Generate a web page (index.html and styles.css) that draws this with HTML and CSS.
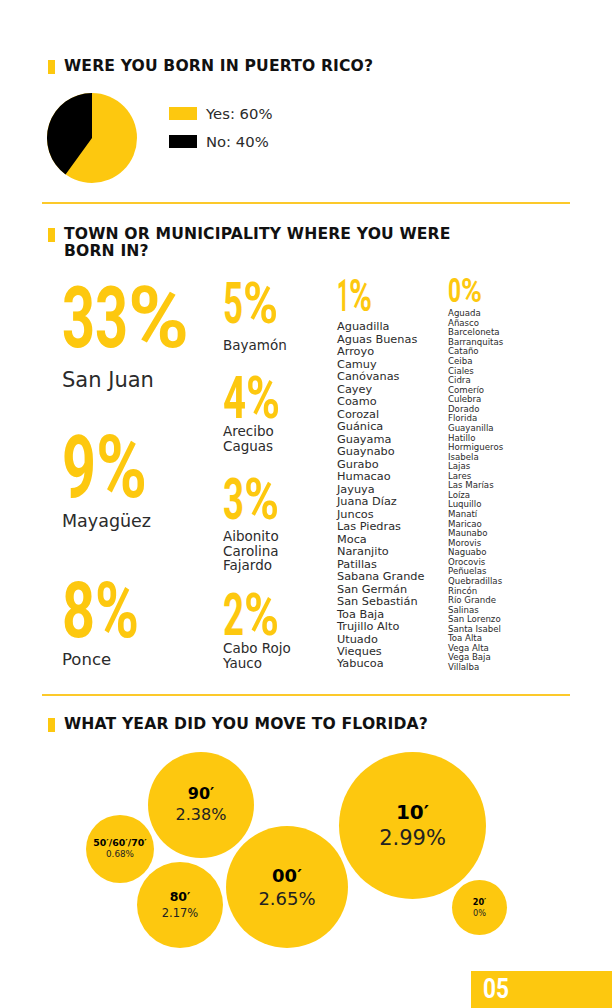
FILE: index.html
```html
<!DOCTYPE html>
<html lang="en">
<head>
<meta charset="utf-8">
<title>Survey results</title>
<link rel="stylesheet" href="styles.css">
</head>
<body>
<div class="page">

  <section class="sec s1">
    <h2 class="title">WERE YOU BORN IN PUERTO RICO?</h2>
    <div class="pie-row">
      <svg class="pie" width="90" height="90" viewBox="0 0 90 90">
        <circle cx="45" cy="45" r="45" fill="#FDC80F"/>
        <path d="M45 45 L18.55 81.41 A45 45 0 0 1 45 0 Z" fill="#000"/>
      </svg>
      <ul class="legend">
        <li><span class="sw sw-yes"></span>Yes: 60%</li>
        <li><span class="sw sw-no"></span>No: 40%</li>
      </ul>
    </div>
    <div class="divider"></div>
  </section>

  <section class="sec s2">
    <h2 class="title">TOWN OR MUNICIPALITY WHERE YOU WERE<br>BORN IN?</h2>
    <div class="cols">
      <div class="col c1">
        <svg class="big g33" width="127" height="60" viewBox="0 0 127 60"><text y="60" font-size="84.4"><tspan x="0" textLength="66" lengthAdjust="spacingAndGlyphs">33</tspan><tspan x="66" textLength="61" lengthAdjust="spacingAndGlyphs">%</tspan></text></svg>
        <p class="name n-sj">San Juan</p>
        <svg class="big g9" width="85" height="62" viewBox="0 0 85 62"><text y="62" font-size="87.2"><tspan x="0" textLength="34" lengthAdjust="spacingAndGlyphs">9</tspan><tspan x="34" textLength="51" lengthAdjust="spacingAndGlyphs">%</tspan></text></svg>
        <p class="name n-my">Mayagüez</p>
        <svg class="big g8" width="77" height="55" viewBox="0 0 77 55"><text y="55" font-size="77.4"><tspan x="0" textLength="33" lengthAdjust="spacingAndGlyphs">8</tspan><tspan x="33" textLength="44" lengthAdjust="spacingAndGlyphs">%</tspan></text></svg>
        <p class="name n-po">Ponce</p>
      </div>

      <div class="col c2">
        <svg class="big g5" width="55" height="41" viewBox="0 0 55 41"><text y="41" font-size="57.7"><tspan x="0" textLength="20" lengthAdjust="spacingAndGlyphs">5</tspan><tspan x="20" textLength="35" lengthAdjust="spacingAndGlyphs">%</tspan></text></svg>
        <p class="mid m5">Bayamón</p>
        <svg class="big g4" width="57" height="42" viewBox="0 0 57 42"><text y="42" font-size="59.1"><tspan x="0" textLength="23" lengthAdjust="spacingAndGlyphs">4</tspan><tspan x="23" textLength="34" lengthAdjust="spacingAndGlyphs">%</tspan></text></svg>
        <p class="mid m4">Arecibo<br>Caguas</p>
        <svg class="big g3" width="56" height="41" viewBox="0 0 56 41"><text y="41" font-size="57.7"><tspan x="0" textLength="21" lengthAdjust="spacingAndGlyphs">3</tspan><tspan x="21" textLength="35" lengthAdjust="spacingAndGlyphs">%</tspan></text></svg>
        <p class="mid m3">Aibonito<br>Carolina<br>Fajardo</p>
        <svg class="big g2" width="56" height="42" viewBox="0 0 56 42"><text y="42" font-size="59.1"><tspan x="0" textLength="21" lengthAdjust="spacingAndGlyphs">2</tspan><tspan x="21" textLength="35" lengthAdjust="spacingAndGlyphs">%</tspan></text></svg>
        <p class="mid m2">Cabo Rojo<br>Yauco</p>
      </div>

      <div class="col c3">
        <svg class="big g1" width="35" height="31" viewBox="0 0 35 31"><text y="31" font-size="43.6"><tspan x="0" textLength="12" lengthAdjust="spacingAndGlyphs">1</tspan><tspan x="12" textLength="23" lengthAdjust="spacingAndGlyphs">%</tspan></text></svg>
        <ul class="list l1">
          <li>Aguadilla</li><li>Aguas Buenas</li><li>Arroyo</li><li>Camuy</li><li>Canóvanas</li><li>Cayey</li><li>Coamo</li><li>Corozal</li><li>Guánica</li><li>Guayama</li><li>Guaynabo</li><li>Gurabo</li><li>Humacao</li><li>Jayuya</li><li>Juana Díaz</li><li>Juncos</li><li>Las Piedras</li><li>Moca</li><li>Naranjito</li><li>Patillas</li><li>Sabana Grande</li><li>San Germán</li><li>San Sebastián</li><li>Toa Baja</li><li>Trujillo Alto</li><li>Utuado</li><li>Vieques</li><li>Yabucoa</li>
        </ul>
      </div>

      <div class="col c4">
        <svg class="big g0" width="34" height="24" viewBox="0 0 34 24"><text y="24" font-size="33.8"><tspan x="0" textLength="13" lengthAdjust="spacingAndGlyphs">0</tspan><tspan x="13" textLength="21" lengthAdjust="spacingAndGlyphs">%</tspan></text></svg>
        <ul class="list l0">
          <li>Aguada</li><li>Añasco</li><li>Barceloneta</li><li>Barranquitas</li><li>Cataño</li><li>Ceiba</li><li>Ciales</li><li>Cidra</li><li>Comerío</li><li>Culebra</li><li>Dorado</li><li>Florida</li><li>Guayanilla</li><li>Hatillo</li><li>Hormigueros</li><li>Isabela</li><li>Lajas</li><li>Lares</li><li>Las Marías</li><li>Loíza</li><li>Luquillo</li><li>Manatí</li><li>Maricao</li><li>Maunabo</li><li>Morovis</li><li>Naguabo</li><li>Orocovis</li><li>Peñuelas</li><li>Quebradillas</li><li>Rincón</li><li>Río Grande</li><li>Salinas</li><li>San Lorenzo</li><li>Santa Isabel</li><li>Toa Alta</li><li>Vega Alta</li><li>Vega Baja</li><li>Villalba</li>
        </ul>
      </div>
    </div>
    <div class="divider"></div>
  </section>

  <section class="sec s3">
    <h2 class="title">WHAT YEAR DID YOU MOVE TO FLORIDA?</h2>
  </section>

  <div class="bubbles">
    <div class="bubble b50"><b>50′/60′/70′</b><span>0.68%</span></div>
    <div class="bubble b90"><b>90′</b><span>2.38%</span></div>
    <div class="bubble b80"><b>80′</b><span>2.17%</span></div>
    <div class="bubble b00"><b>00′</b><span>2.65%</span></div>
    <div class="bubble b10"><b>10′</b><span>2.99%</span></div>
    <div class="bubble b20"><b>20′</b><span>0%</span></div>
  </div>

  <footer class="foot">
    <div class="pageno">
      <svg class="pn" width="26" height="20" viewBox="0 0 26 20"><text x="0" y="20" font-size="28" textLength="26" lengthAdjust="spacingAndGlyphs">05</text></svg>
    </div>
  </footer>
</div>
</body>
</html>
```

FILE: styles.css
```css
* { box-sizing: border-box; }

body {
  margin: 0;
  background: #fff;
  font-family: "DejaVu Sans", "Open Sans", sans-serif;
  color: #2b2b2b;
}

.page {
  width: 612px;
  height: 1008px;
  overflow: hidden;
}

.sec { padding-left: 48px; }

.title {
  display: flex;
  align-items: flex-start;
  gap: 9px;
  margin: 0;
  font-family: "DejaVu Sans", sans-serif;
  font-weight: bold;
  font-size: 15.6px;
  line-height: 17px;
  letter-spacing: 0.15px;
  color: #111;
}
.title::before {
  content: "";
  flex: none;
  width: 7px;
  height: 14px;
  margin-top: 2px;
  background: #FDC80F;
}

.s1 .title { margin-top: 57.5px; }

.pie-row {
  display: flex;
  align-items: flex-start;
  margin-top: 18.5px;
}
.pie { display: block; margin-left: -1px; }

.legend {
  list-style: none;
  margin: 14px 0 0 32px;
  padding: 0;
  display: flex;
  flex-direction: column;
  gap: 15px;
}
.legend li {
  display: flex;
  align-items: center;
  gap: 9px;
  height: 13px;
  font-size: 14.8px;
  line-height: 13px;
  color: #2b2b2b;
}
.sw { display: block; width: 28px; height: 13px; }
.sw-yes { background: #FDC80F; }
.sw-no { background: #000; }

.divider {
  width: 528px;
  height: 2px;
  margin-left: -6px;
  background: #FCC92A;
}
.s1 .divider { margin-top: 19px; }

.s2 .title { margin-top: 22px; }

.cols {
  display: flex;
  height: 434px;
  padding-left: 14px;
}
.col { display: flex; flex-direction: column; align-items: flex-start; }
.c1 { width: 161px; }
.c2 { width: 114px; }
.c3 { width: 111px; }
.c4 { flex: 1; }

.big {
  display: block;
  overflow: visible;
  flex: none;
}
.big text, .pn text {
  font-family: "Roboto", "DejaVu Sans Condensed", sans-serif;
  font-weight: 700;
  fill: #FDC80F;
}

.name { margin: 0; color: #2b2b2b; }
.g33 { margin-top: 27px; }
.n-sj { margin-top: 21px; font-size: 21px; line-height: 24px; }
.g9 { margin-top: 43px; }
.n-my { margin-top: 13.5px; font-size: 17.5px; line-height: 20px; }
.g8 { margin-top: 51.5px; }
.n-po { margin-top: 12.7px; font-size: 16.5px; line-height: 20px; }

.mid { margin: 0; font-size: 13.5px; line-height: 14.5px; color: #2b2b2b; }
.g5 { margin-top: 22px; }
.m5 { margin-top: 15px; }
.g4 { margin-top: 23.5px; }
.m4 { margin-top: 6px; }
.g3 { margin-top: 25px; }
.m3 { margin-top: 10px; }
.g2 { margin-top: 20.5px; }
.m2 { margin-top: 6px; }

.list { list-style: none; margin: 0; padding: 0; color: #2b2b2b; white-space: nowrap; }
.g1 { margin-top: 20px; }
.l1 { margin-top: 10.4px; font-size: 11.3px; line-height: 12.48px; }
.g0 { margin-top: 18px; }
.l0 { margin-top: 7.2px; font-size: 8.6px; line-height: 9.57px; }

.s3 .title { margin-top: 19.5px; }

.bubbles {
  position: relative;
  height: 220px;
  margin-top: 7.5px;
}
.bubble {
  position: absolute;
  border-radius: 50%;
  background: #FDC80F;
  display: flex;
  flex-direction: column;
  align-items: center;
  justify-content: center;
  line-height: 1.3;
  color: #111;
  text-align: center;
}
.bubble b { font-weight: bold; color: #000; }
.bubble span { color: #222; }

.b50 { left: 86px; top: 75px; width: 68px; height: 68px; }
.b50 b { font-size: 9.4px; }
.b50 span { font-size: 8.8px; }

.b90 { left: 148px; top: 12px; width: 106px; height: 106px; }
.b90 b { font-size: 16px; }
.b90 span { font-size: 16px; }

.b80 { left: 137px; top: 122px; width: 86px; height: 86px; }
.b80 b { font-size: 12.5px; }
.b80 span { font-size: 11.5px; }

.b00 { left: 226px; top: 86px; width: 122px; height: 122px; }
.b00 b { font-size: 18px; }
.b00 span { font-size: 18px; }

.b10 { left: 339px; top: 12px; width: 147px; height: 147px; }
.b10 b { font-size: 20px; }
.b10 span { font-size: 21px; }

.b20 { left: 452px; top: 140px; width: 55px; height: 55px; }
.b20 b { font-size: 8.2px; }
.b20 span { font-size: 8.2px; }

.foot {
  display: flex;
  justify-content: flex-end;
  margin-top: 11px;
}
.pageno {
  width: 141px;
  height: 37px;
  background: #FDC80F;
  padding: 7px 0 0 12px;
}
.pn { display: block; overflow: visible; }
.pn text { fill: #fff; }
```
